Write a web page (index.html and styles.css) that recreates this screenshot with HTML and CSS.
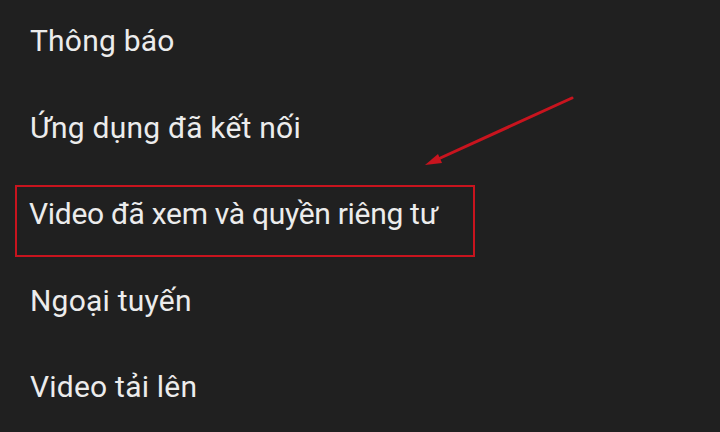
FILE: index.html
```html
<!DOCTYPE html>
<html lang="vi">
<head>
<meta charset="utf-8">
<link rel="stylesheet" href="styles.css">
</head>
<body>
<div class="screen">
  <ul class="menu">
    <li class="item">Thông báo</li>
    <li class="item">Ứng dụng đã kết nối</li>
    <li class="item item-tight">Video đã xem và quyền riêng tư</li>
    <li class="item">Ngoại tuyến</li>
    <li class="item">Video tải lên</li>
  </ul>
  <div class="highlight"></div>
  <svg class="arrow" width="720" height="432" viewBox="0 0 720 432">
    <line x1="572" y1="98" x2="436" y2="160" stroke="#c8141e" stroke-width="3" stroke-linecap="round"/>
    <polygon points="425,165 438,154 442,163" fill="#c8141e"/>
  </svg>
</div>
</body>
</html>
```
FILE: styles.css
```css
html, body {
  margin: 0;
  padding: 0;
  background: #202020;
}
.screen {
  position: relative;
  width: 720px;
  height: 432px;
  overflow: hidden;
  background: #202020;
}
.menu {
  list-style: none;
  margin: -2px 0 0 0;
  padding: 0 0 0 30px;
  display: flex;
  flex-direction: column;
}
.item {
  height: 86.5px;
  line-height: 86.5px;
  font-family: Roboto, "Noto Sans", sans-serif;
  font-size: 30px;
  letter-spacing: 0.22px;
  color: #ececec;
  white-space: nowrap;
}
.item-tight {
  margin-left: -1px;
  letter-spacing: -0.3px;
}
.highlight {
  position: absolute;
  left: 15px;
  top: 185px;
  width: 456px;
  height: 68px;
  border: 2px solid #c8141e;
}
.arrow {
  position: absolute;
  left: 0;
  top: 0;
}
```
